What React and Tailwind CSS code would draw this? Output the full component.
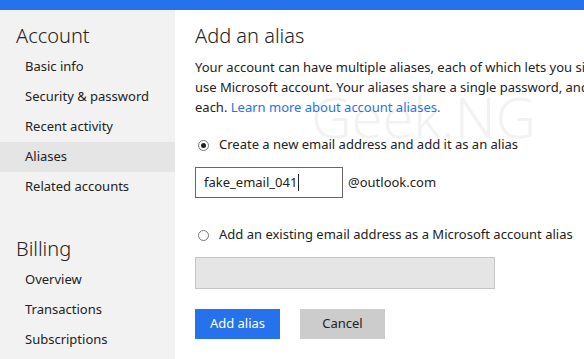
export default function App() {
    const accountLinks = ["Basic info", "Security & password", "Recent activity", "Aliases", "Related accounts"];
    const billingLinks = ["Overview", "Transactions", "Subscriptions"];

    return (
        <div className="w-[584px] h-[359px] overflow-hidden flex flex-col bg-white text-[#222] font-['Segoe_UI','Noto_Sans',sans-serif]">
            {/* Top bar */}
            <div className="h-[10px] bg-[#2672ec] shrink-0" />

            <div className="flex flex-1 min-h-0">
                {/* Sidebar */}
                <aside className="w-[175px] shrink-0 bg-[#f2f2f2] pt-[13px]">
                    <h2 className="pl-[16px] text-[20px] font-light leading-[26px] mb-[3px]">Account</h2>
                    <ul>
                        {accountLinks.map((link) => (
                            <li
                                key={link}
                                className={`pl-[25px] h-[30px] flex items-center text-[13px] ${link === "Aliases" ? "bg-[#e5e5e5]" : ""}`}
                            >
                                {link}
                            </li>
                        ))}
                    </ul>
                    <h2 className="pl-[16px] text-[20px] font-light leading-[26px] mt-[34px] mb-[3px]">Billing</h2>
                    <ul>
                        {billingLinks.map((link) => (
                            <li key={link} className="pl-[25px] h-[30px] flex items-center text-[13px]">
                                {link}
                            </li>
                        ))}
                    </ul>
                </aside>

                {/* Main */}
                <main className="relative flex-1 pl-[20px] pt-[13px] overflow-hidden">
                    {/* Watermark */}
                    <div className="absolute left-[136px] top-[78px] text-[56px] font-light text-[#f2f2f2] leading-none whitespace-nowrap pointer-events-none select-none">
                        Geek.NG
                    </div>

                    <div className="relative">
                        <h1 className="text-[20px] font-light leading-[26px] mb-[8px]">Add an alias</h1>
                        <p className="text-[13px] leading-[20px] whitespace-nowrap">
                            Your account can have multiple aliases, each of which lets you sign in to services that
                            <br />
                            use Microsoft account. Your aliases share a single password, and you can send email from
                            <br />
                            each. <a className="text-[#2672ec]">Learn more about account aliases.</a>
                        </p>

                        <label className="flex items-center mt-[18px] h-[20px] text-[13px]">
                            <span className="ml-[3px] w-[11px] h-[11px] rounded-full border border-[#777] bg-white flex items-center justify-center">
                                <span className="w-[5px] h-[5px] rounded-full bg-[#222]" />
                            </span>
                            <span className="ml-[10px]">Create a new email address and add it as an alias</span>
                        </label>

                        <div className="flex items-center mt-[12px]">
                            <div className="w-[148px] h-[31px] border border-[#666] flex items-center pl-[8px] text-[13px]">
                                fake_email_041<span className="w-px h-[17px] bg-[#222] ml-[1px]" />
                            </div>
                            <span className="ml-[5px] text-[13px]">@outlook.com</span>
                        </div>

                        <label className="flex items-center mt-[27px] h-[20px] text-[13px]">
                            <span className="ml-[3px] w-[11px] h-[11px] rounded-full border border-[#777] bg-white" />
                            <span className="ml-[10px] whitespace-nowrap">Add an existing email address as a Microsoft account alias</span>
                        </label>

                        <div className="mt-[12px] w-[300px] h-[32px] bg-[#e5e5e5] border border-[#c6c6c6]" />

                        <div className="flex gap-[20px] mt-[20px]">
                            <button className="w-[85px] h-[30px] bg-[#2672ec] text-white text-[13px]">Add alias</button>
                            <button className="w-[85px] h-[30px] bg-[#cccccc] text-[#222] text-[13px]">Cancel</button>
                        </div>
                    </div>
                </main>
            </div>
        </div>
    );
}
